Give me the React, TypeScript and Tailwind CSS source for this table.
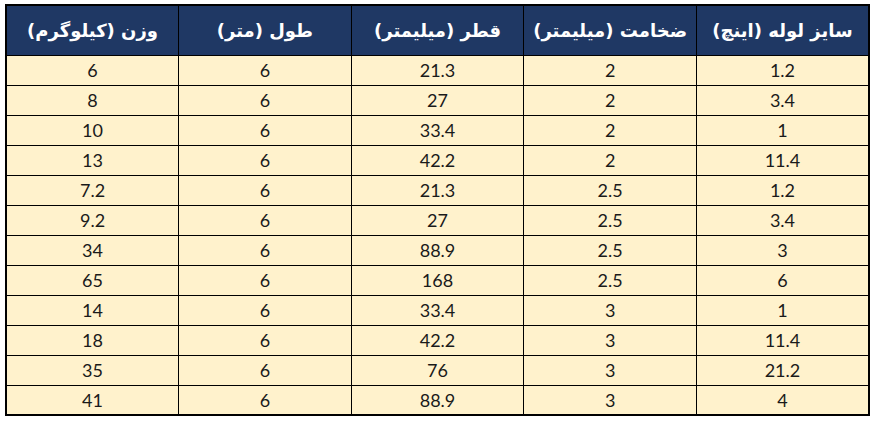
import React from "react";

const HEAD = ["سایز لوله (اینچ)", "ضخامت (میلیمتر)", "قطر (میلیمتر)", "طول (متر)", "وزن (کیلوگرم)"];

const ROWS: string[][] = [
  ["1.2", "2", "21.3", "6", "6"],
  ["3.4", "2", "27", "6", "8"],
  ["1", "2", "33.4", "6", "10"],
  ["11.4", "2", "42.2", "6", "13"],
  ["1.2", "2.5", "21.3", "6", "7.2"],
  ["3.4", "2.5", "27", "6", "9.2"],
  ["3", "2.5", "88.9", "6", "34"],
  ["6", "2.5", "168", "6", "65"],
  ["1", "3", "33.4", "6", "14"],
  ["11.4", "3", "42.2", "6", "18"],
  ["21.2", "3", "76", "6", "35"],
  ["4", "3", "88.9", "6", "41"],
];

export default function App() {
  return (
    <div className="h-[421px] w-[876px] bg-white pl-[5px] pt-[4px]">
      <table dir="rtl" className="w-[865px] table-fixed border-collapse border-2 border-black">
        <thead>
          <tr className="h-[50px] bg-[#1f3864]">
            {HEAD.map((h) => (
              <th
                key={h}
                className="border border-black text-center text-[18px] font-bold text-white [font-family:'DejaVu_Sans',sans-serif]"
              >
                {h}
              </th>
            ))}
          </tr>
        </thead>
        <tbody>
          {ROWS.map((r, i) => (
            <tr key={i} className="h-[30px] bg-[#fff2cc]">
              {r.map((c, j) => (
                <td
                  key={j}
                  className="border border-black p-0 text-center text-[18px] leading-none text-[#1a1a1a] [font-family:Lato,sans-serif]"
                >
                  {c}
                </td>
              ))}
            </tr>
          ))}
        </tbody>
      </table>
    </div>
  );
}
